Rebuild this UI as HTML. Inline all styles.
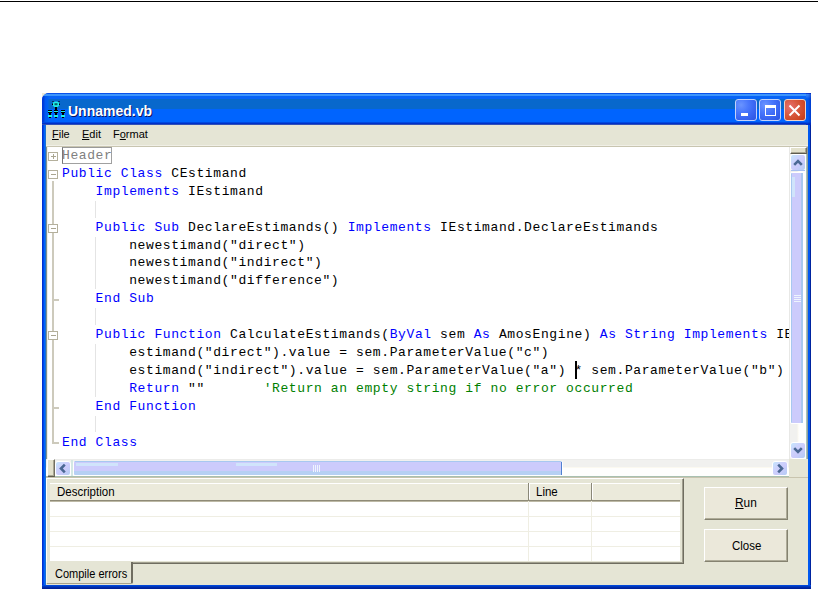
<!DOCTYPE html>
<html><head><meta charset="utf-8">
<style>
*{margin:0;padding:0;box-sizing:border-box}
html,body{width:818px;height:589px;overflow:hidden;background:#fff;position:relative;font-family:"Liberation Sans",sans-serif}
div,span.a,pre{position:absolute}
#topline{left:0;top:1px;width:818px;height:1px;background:#000}
#win{left:42px;top:93px;width:769px;height:496px;background:#0a46e0;border-radius:7px 0 0 0;overflow:hidden}
#title{left:0;top:0;width:769px;height:32px;
background:linear-gradient(to bottom,#0852ec 0,#0852ec 1px,#3d95fc 1px,#3d95fc 3px,#0864f6 3px,#0864f6 6px,#0868cc 6px,#0868cc 16px,#0064fe 16px,#0064fe 29px,#0048e0 29px,#0048e0 30px,#0030c8 30px,#0030c8 31px,#3050b8 31px)}
#lb{left:0;top:32px;width:4px;height:464px;background:linear-gradient(to right,#0030d0 0,#0030d0 1px,#0048e8 1px,#0048e8 2px,#0064ff 2px,#0064ff 3px,#1a70d0 3px)}
#rb{right:0;top:32px;width:3px;height:464px;background:linear-gradient(to right,#0058f0 0,#0058f0 2px,#0024a0 2px)}
#bb{left:0;bottom:0;width:769px;height:4px;background:linear-gradient(to bottom,#0050e8,#0030b0 2px,#001c90)}
#client{left:46px;top:125px;width:762px;height:460px;background:#e5e5d5}
.mi{font-size:11px;color:#000}
#editor{left:46px;top:147px;width:744px;height:312px;background:#fff}
pre{font-family:"Liberation Mono",monospace;font-size:13px;letter-spacing:0.6px;line-height:17.9px;color:#000}
.k{color:#0000ff}
.c{color:#008000}
.hd{color:#808080}
.gbox{width:10px;height:9px;border:1px solid #b4b09c;background:#fff}
.gbox:before{content:"";position:absolute;left:1.5px;top:3px;width:5px;height:1px;background:#a9a590}
.gplus:after{content:"";position:absolute;left:3.5px;top:1px;width:1px;height:5px;background:#a9a590}
.vg{background:#cdcabc}
.sbtn{border:1px solid #fff;border-radius:3px;background:linear-gradient(135deg,#c4e6fc 0%,#cdd2fc 35%,#cbcbfb 60%,#b2cdf4 100%)}
.thumbv{border:1px solid #fff;border-right-width:2px;border-radius:2px;background:linear-gradient(to right,#a8c8f0 0,#a8c8f0 1px,#cccbfc 1px,#cccbfc 10px,#a8c8ee 10px)}
.thumbh{border:1px solid #fff;border-top:0;border-left-width:1px;border-radius:2px;background:linear-gradient(to bottom,#a8c8f0 0,#a8c8f0 1px,#cccbfc 1px,#cccbfc 10px,#b6d0f4 10px)}
.btn{border:1px solid #858270;border-top-color:#fff;border-left-color:#fff;box-shadow:inset -1px -1px 0 #aeab98;background:#ebe8da}
.cb{width:22px;height:22px;border:1px solid #c4d2fa;border-radius:3px;background:radial-gradient(circle at 25% 25%,#6a94ff 0,#4a78fc 35%,#3c68f4 60%,#2c54e0 100%)}
.cl{border-color:#f0d4c8;background:radial-gradient(circle at 25% 35%,#e87070 0,#d85a40 40%,#d04a28 70%,#c03818 100%)}
.lh{font-size:11.5px;color:#000}
</style></head><body>
<div id="topline"></div>
<div style="left:42px;top:93px;width:4px;height:4px;background:#ece9d8"></div>
<div id="win">
  <div id="title"></div>
  <div style="left:764px;top:0;width:5px;height:32px;background:linear-gradient(to right,rgba(0,32,160,0) 0,rgba(0,32,160,0) 2px,rgba(0,32,170,.5) 5px),linear-gradient(to bottom,#0a3ad0 0,#0a3ad0 1px,#3a88f8 1px,#2a78f4 3px,#0058f0 6px,#0058f0 29px,#0040d0 30px,#0030c8 31px)"></div>
  <div style="left:0;top:3px;width:7px;height:26px;background:linear-gradient(to right,#0034d4 0,#0040e0 2px,#0058f0 3px,#0060f4 6px,rgba(0,96,244,0) 7px)"></div>
  <div id="lb"></div><div id="rb"></div><div id="bb"></div>
</div>
<!-- title text -->
<div style="left:68px;top:103px;font-size:14px;font-weight:bold;color:#fff;text-shadow:1px 1px 0 #0a1464;letter-spacing:0px;white-space:nowrap">Unnamed.vb</div>
<div id="client"></div>
<!-- icon -->
<svg style="position:absolute;left:46px;top:100px" width="20" height="20">
<ellipse cx="10" cy="4.2" rx="3.4" ry="2.8" fill="#1ff0e6"/>
<rect x="8.5" y="3.2" width="3" height="2" fill="#0a6070"/>
<rect x="6.5" y="1" width="1" height="1" fill="#000"/><rect x="12.5" y="1" width="1" height="1" fill="#000"/>
<rect x="6" y="3.5" width="1" height="1.5" fill="#000"/><rect x="13" y="3.5" width="1" height="1.5" fill="#000"/>
<rect x="9" y="7" width="2" height="3" fill="#000"/>
<g><rect x="2" y="10" width="4" height="1" fill="#000"/><rect x="2" y="11" width="4" height="1" fill="#1ff0e6"/><rect x="2" y="12" width="4" height="1" fill="#000"/><rect x="3" y="13" width="2" height="2" fill="#000"/><rect x="2" y="15" width="4" height="2" fill="#1ff0e6"/><rect x="3" y="17" width="2" height="1" fill="#000"/></g><g transform="translate(6,0)"><rect x="2" y="10" width="4" height="1" fill="#000"/><rect x="2" y="11" width="4" height="1" fill="#1ff0e6"/><rect x="2" y="12" width="4" height="1" fill="#000"/><rect x="3" y="13" width="2" height="2" fill="#000"/><rect x="2" y="15" width="4" height="2" fill="#1ff0e6"/><rect x="3" y="17" width="2" height="1" fill="#000"/></g><g transform="translate(13,0)"><rect x="2" y="10" width="4" height="1" fill="#000"/><rect x="2" y="11" width="4" height="1" fill="#1ff0e6"/><rect x="2" y="12" width="4" height="1" fill="#000"/><rect x="3" y="13" width="2" height="2" fill="#000"/><rect x="2" y="15" width="4" height="2" fill="#1ff0e6"/><rect x="3" y="17" width="2" height="1" fill="#000"/></g>
</svg>
<!-- caption buttons -->
<div class="cb" style="left:735px;top:99px"></div>
<div style="left:741px;top:113px;width:7px;height:3px;background:#fff"></div>
<div class="cb" style="left:759px;top:99px"></div>
<div style="left:765px;top:105px;width:11px;height:11px;border:1px solid #fff;border-top-width:3px"></div>
<div class="cb cl" style="left:784px;top:99px"></div>
<svg style="position:absolute;left:784px;top:99px" width="22" height="22"><path d="M5.5 6.5 L15.5 16.5 M15.5 6.5 L5.5 16.5" stroke="#fff" stroke-width="2" fill="none"/></svg>

<!-- menu -->
<div class="mi" style="left:52px;top:128px"><u>F</u>ile</div>
<div class="mi" style="left:82px;top:128px"><u>E</u>dit</div>
<div class="mi" style="left:113px;top:128px">F<u>o</u>rmat</div>
<div style="left:46px;top:145px;width:762px;height:1px;background:#f0efe6"></div>
<div style="left:46px;top:146px;width:762px;height:1px;background:#c8c5b0"></div>
<!-- editor -->
<div id="editor"></div>
<div style="left:46px;top:147px;width:1px;height:312px;background:#7f9090"></div>
<div style="left:47px;top:147px;width:1px;height:312px;background:#efede6"></div>
<!-- code -->
<div style="left:46px;top:147px;width:743px;height:312px;overflow:hidden"><pre style="left:16px;top:0px"><span class="hd">Header</span>
<span class="k">Public Class</span> CEstimand
    <span class="k">Implements</span> IEstimand

    <span class="k">Public Sub</span> DeclareEstimands() <span class="k">Implements</span> IEstimand.DeclareEstimands
        newestimand("direct")
        newestimand("indirect")
        newestimand("difference")
    <span class="k">End Sub</span>

    <span class="k">Public Function</span> CalculateEstimands(<span class="k">ByVal</span> sem <span class="k">As</span> AmosEngine) <span class="k">As String</span> <span class="k">Implements</span> IEstimand.CalculateEstimands
        estimand("direct").value = sem.ParameterValue("c")
        estimand("indirect").value = sem.ParameterValue("a") * sem.ParameterValue("b")
        <span class="k">Return</span> ""       <span class="c">'Return an empty string if no error occurred</span>
    <span class="k">End Function</span>

<span class="k">End Class</span></pre></div>
<div style="left:62px;top:147px;width:50px;height:17px;border:1px solid #a0a0a0;border-left-color:#777;border-top-color:#999"></div>
<div class="vg" style="left:52px;top:181px;width:2px;height:263px"></div>
<div class="vg" style="left:52px;top:442px;width:7px;height:2px"></div>
<div class="vg" style="left:53px;top:299px;width:6px;height:2px"></div>
<div class="vg" style="left:53px;top:407px;width:6px;height:2px"></div>
<div class="gbox gplus" style="left:48px;top:152px"></div>
<div class="gbox" style="left:48px;top:170px"></div>
<div class="gbox" style="left:48px;top:224px"></div>
<div class="gbox" style="left:48px;top:331px"></div>
<div style="left:95px;top:200.7px;width:1px;height:16.9px;background:#e4e4e4"></div>
<div style="left:95px;top:236.5px;width:1px;height:52.7px;background:#e4e4e4"></div>
<div style="left:95px;top:308.1px;width:1px;height:16.9px;background:#e4e4e4"></div>
<div style="left:95px;top:343.9px;width:1px;height:52.7px;background:#e4e4e4"></div>
<div style="left:95px;top:415.5px;width:1px;height:16.9px;background:#e4e4e4"></div>
<div style="left:575px;top:361px;width:2px;height:18px;background:#000"></div>
<div style="left:789px;top:147px;width:19px;height:312px;background:linear-gradient(to right,#e8e8e6 0,#e8e8e6 1px,#f1f1ef 1px,#f1f1ef 8px,#fbf9f0 9px,#fefefd 10px,#fefefd 17px,#a8c4b8 17px,#a8c4b8 18px,#8c9ca0 18px)"></div>
<div style="left:790px;top:147px;width:17px;height:7px;background:#e3e1cc;border-top:1px solid #fff;border-left:1px solid #fff;border-right:1px solid #716e5f;border-bottom:1px solid #5e5b4e;box-shadow:inset -1px -1px 0 #a9a692"></div>
<div class="sbtn" style="left:790px;top:154px;width:16px;height:17px"></div>
<div style="left:791px;top:170px;width:14px;height:1px;background:#a8c0f0"></div>
<svg style="position:absolute;left:790px;top:154px" width="16" height="17"><path d="M4.2 10.8 L8 7 L11.8 10.8" stroke="#4a6894" stroke-width="2.6" fill="none"/></svg>
<div class="thumbv" style="left:790px;top:172px;width:15px;height:252px"></div>
<div style="left:794px;top:295px;width:7px;height:1px;background:#eef4fe;box-shadow:0 2px 0 #eef4fe,0 4px 0 #eef4fe,0 6px 0 #eef4fe"></div>
<div class="sbtn" style="left:790px;top:442px;width:16px;height:17px"></div>
<svg style="position:absolute;left:790px;top:442px" width="16" height="17"><path d="M4.2 6.2 L8 10 L11.8 6.2" stroke="#4a6894" stroke-width="2.6" fill="none"/></svg>
<div style="left:46px;top:459px;width:743px;height:18px;background:linear-gradient(to bottom,#ececea 0,#ececea 1px,#f1f1ef 1px,#f1f1ef 8px,#fbf9f0 8px,#fbf9f0 9px,#fefefd 9px,#fefefd 17px,#a8c0b0 17px)"></div>
<div style="left:47px;top:459px;width:8px;height:18px;background:#e3e1cc;border-top:1px solid #fff;border-left:1px solid #fff;border-right:1px solid #716e5f;border-bottom:1px solid #5e5b4e;box-shadow:inset -1px -1px 0 #a9a692"></div>
<div class="sbtn" style="left:55px;top:461px;width:16px;height:15px"></div>
<svg style="position:absolute;left:55px;top:461px" width="16" height="15"><path d="M9.8 3.7 L6 7.5 L9.8 11.3" stroke="#4a6894" stroke-width="2.6" fill="none"/></svg>
<div style="left:71px;top:460px;width:2px;height:16px;background:#d4e8e4"></div>
<div class="thumbh" style="left:73px;top:461px;width:490px;height:15px"></div>
<div style="left:561px;top:462px;width:1px;height:13px;background:#5080d0"></div>
<div style="left:76px;top:463px;width:42px;height:3px;background:#d0e4fb"></div>
<div style="left:236px;top:463px;width:41px;height:3px;background:#d0e4fb"></div>
<div style="left:792px;top:177px;width:3px;height:20px;background:#d0e4fb"></div>
<div style="left:313px;top:465px;width:1px;height:7px;background:#eef4fe;box-shadow:2px 0 0 #eef4fe,4px 0 0 #eef4fe,6px 0 0 #eef4fe"></div>
<div class="sbtn" style="left:772px;top:461px;width:16px;height:15px"></div>
<svg style="position:absolute;left:772px;top:461px" width="16" height="15"><path d="M6.2 3.7 L10 7.5 L6.2 11.3" stroke="#4a6894" stroke-width="2.6" fill="none"/></svg>
<div style="left:789px;top:459px;width:19px;height:18px;background:#e5e5d5"></div>
<div style="left:46px;top:477px;width:762px;height:1px;background:#c8c4ae"></div>
<div style="left:46px;top:478px;width:638px;height:86px;background:#e5e5d5;border-top:1px solid #fff;border-left:1px solid #fff;border-right:1px solid #6f6d60;border-bottom:1px solid #6f6d60;box-shadow:inset -1px -1px 0 #a19f8f"></div>
<div style="left:50px;top:483px;width:630px;height:78px;background:#fff"></div>
<div style="left:50px;top:483px;width:630px;height:18px;background:#ebeadb;border-top:1px solid #fff;border-bottom:1px solid #8e8a76;box-shadow:0 1px 0 #bdb9a5"></div>
<div style="left:528px;top:483px;width:1px;height:17px;background:#8a8878"></div>
<div style="left:529px;top:484px;width:1px;height:15px;background:#fff"></div>
<div style="left:528px;top:501px;width:1px;height:60px;background:#efeee3"></div>
<div style="left:591px;top:483px;width:1px;height:17px;background:#8a8878"></div>
<div style="left:592px;top:484px;width:1px;height:15px;background:#fff"></div>
<div style="left:591px;top:501px;width:1px;height:60px;background:#efeee3"></div>
<div style="left:50px;top:516px;width:630px;height:1px;background:#efeee3"></div>
<div style="left:50px;top:531px;width:630px;height:1px;background:#efeee3"></div>
<div style="left:50px;top:546px;width:630px;height:1px;background:#efeee3"></div>
<div class="lh" style="left:57px;top:485px;font-size:12.5px;transform:scaleX(0.92);transform-origin:0 0">Description</div>
<div class="lh" style="left:536px;top:485px;font-size:12.5px;transform:scaleX(0.92);transform-origin:0 0">Line</div>
<div style="left:46px;top:562px;width:87px;height:22px;background:#e5e5d5;border-left:1px solid #f4f4ee;border-right:2px solid #6f6d60;border-bottom:1px solid #a8a28c;border-radius:0 0 2px 0"></div>
<div class="lh" style="left:55px;top:567px;font-size:12.5px;transform:scaleX(0.88);transform-origin:0 0">Compile errors</div>
<div class="btn" style="left:704px;top:487px;width:84px;height:33px"></div>
<div class="btn" style="left:704px;top:529px;width:84px;height:33px"></div>
<div class="lh" style="left:735px;top:496px;font-size:12.5px;transform:scaleX(0.95);transform-origin:0 0"><u>R</u>un</div>
<div class="lh" style="left:732px;top:539px;font-size:12.5px;transform:scaleX(0.92);transform-origin:0 0">Close</div>
</body></html>
